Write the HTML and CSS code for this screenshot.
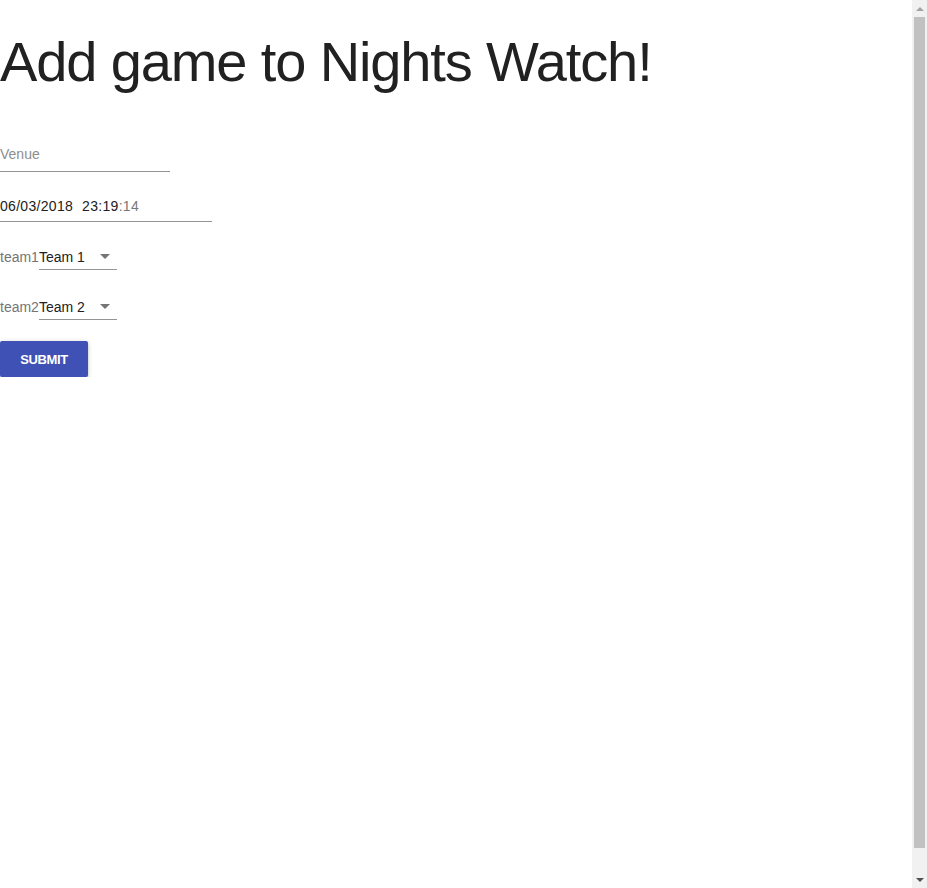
FILE: index.html
```html
<!DOCTYPE html>
<html lang="en">
<head>
<meta charset="utf-8">
<title>Add game</title>
<link rel="stylesheet" href="styles.css">
</head>
<body>
<main class="page">
  <h1 class="title">Add game to Nights Watch!</h1>
  <form class="form">
    <div class="field field-venue">
      <input class="input" type="text" placeholder="Venue">
    </div>
    <div class="field field-date">
      <span class="date">06/03/2018</span><span class="time">23:19<span class="dim">:14</span></span>
    </div>
    <div class="team-row">
      <span class="team-label">team1</span>
      <div class="select">
        <span class="select-value">Team 1</span>
        <svg class="select-icon" viewBox="0 0 24 24" width="24" height="24"><path d="M7 10l5 5 5-5z"/></svg>
      </div>
    </div>
    <div class="team-row team-row-2">
      <span class="team-label">team2</span>
      <div class="select">
        <span class="select-value">Team 2</span>
        <svg class="select-icon" viewBox="0 0 24 24" width="24" height="24"><path d="M7 10l5 5 5-5z"/></svg>
      </div>
    </div>
    <button class="submit" type="button">Submit</button>
  </form>
</main>
<div class="scrollbar" aria-hidden="true">
  <div class="scroll-arrow scroll-up"></div>
  <div class="scroll-track"><div class="scroll-thumb"></div></div>
  <div class="scroll-arrow scroll-down"></div>
</div>
</body>
</html>
```

FILE: styles.css
```css
html, body {
  margin: 0;
  padding: 0;
  background: #ffffff;
}

body {
  font-family: "Liberation Sans", Arial, sans-serif;
  color: #212121;
}

.page {
  display: flex;
  flex-direction: column;
  align-items: flex-start;
}

.title {
  margin: 30px 0 0 0;
  font-size: 56px;
  line-height: 64px;
  font-weight: 400;
  letter-spacing: -0.02em;
  color: #212121;
}

.form {
  margin-top: 52px;
  display: flex;
  flex-direction: column;
  align-items: flex-start;
}

.field {
  font-size: 14px;
  line-height: 16px;
  border-bottom: 1px solid #949494;
}

.field-venue {
  width: 170px;
  padding-bottom: 9px;
}

.input {
  display: block;
  width: 100%;
  border: 0;
  padding: 0;
  margin: 0;
  outline: none;
  background: transparent;
  font-family: "Liberation Sans", Arial, sans-serif;
  font-size: 14px;
  line-height: 16px;
  height: 16px;
  color: #212121;
}

.input::placeholder {
  color: #8e8e8e;
  opacity: 1;
}

.field-date {
  width: 212px;
  margin-top: 26px;
  padding-bottom: 7px;
  color: #212121;
  letter-spacing: 0.3px;
}

.time {
  margin-left: 9px;
}

.dim {
  color: #777777;
}

.team-row {
  margin-top: 27px;
  display: flex;
  align-items: flex-start;
  font-size: 14px;
  line-height: 16px;
}

.team-row-2 {
  margin-top: 29px;
}

.team-label {
  color: #757575;
}

.select {
  position: relative;
  width: 78px;
  padding-bottom: 4px;
  border-bottom: 1px solid #949494;
  color: #212121;
}

.select-icon {
  position: absolute;
  right: 0;
  top: -5px;
  fill: #757575;
}

.submit {
  margin-top: 21px;
  min-width: 88px;
  height: 36px;
  padding: 0 16px;
  border: 0;
  border-radius: 2px;
  background: #3f51b5;
  color: #ffffff;
  font-family: "Liberation Sans", Arial, sans-serif;
  font-size: 13px;
  font-weight: 700;
  letter-spacing: -0.4px;
  text-transform: uppercase;
  box-shadow: 0 1px 5px 0 rgba(0, 0, 0, 0.2), 0 2px 2px 0 rgba(0, 0, 0, 0.14), 0 3px 1px -2px rgba(0, 0, 0, 0.12);
  cursor: pointer;
}

/* decorative browser scrollbar seen in the reference */
.scrollbar {
  position: fixed;
  top: 0;
  right: 0;
  bottom: 0;
  width: 15px;
  background: #f1f1f1;
  display: flex;
  flex-direction: column;
}

.scroll-arrow {
  height: 17px;
  display: flex;
  align-items: center;
  justify-content: center;
}

.scroll-up::before,
.scroll-down::before {
  content: "";
  width: 0;
  height: 0;
  border-left: 4px solid transparent;
  border-right: 4px solid transparent;
}

.scroll-up::before {
  border-bottom: 4px solid #a3a3a3;
}

.scroll-down::before {
  border-top: 4px solid #505050;
}

.scroll-track {
  flex: 1;
  padding: 0 2px 23px 2px;
}

.scroll-thumb {
  height: 100%;
  background: #c1c1c1;
}
```
